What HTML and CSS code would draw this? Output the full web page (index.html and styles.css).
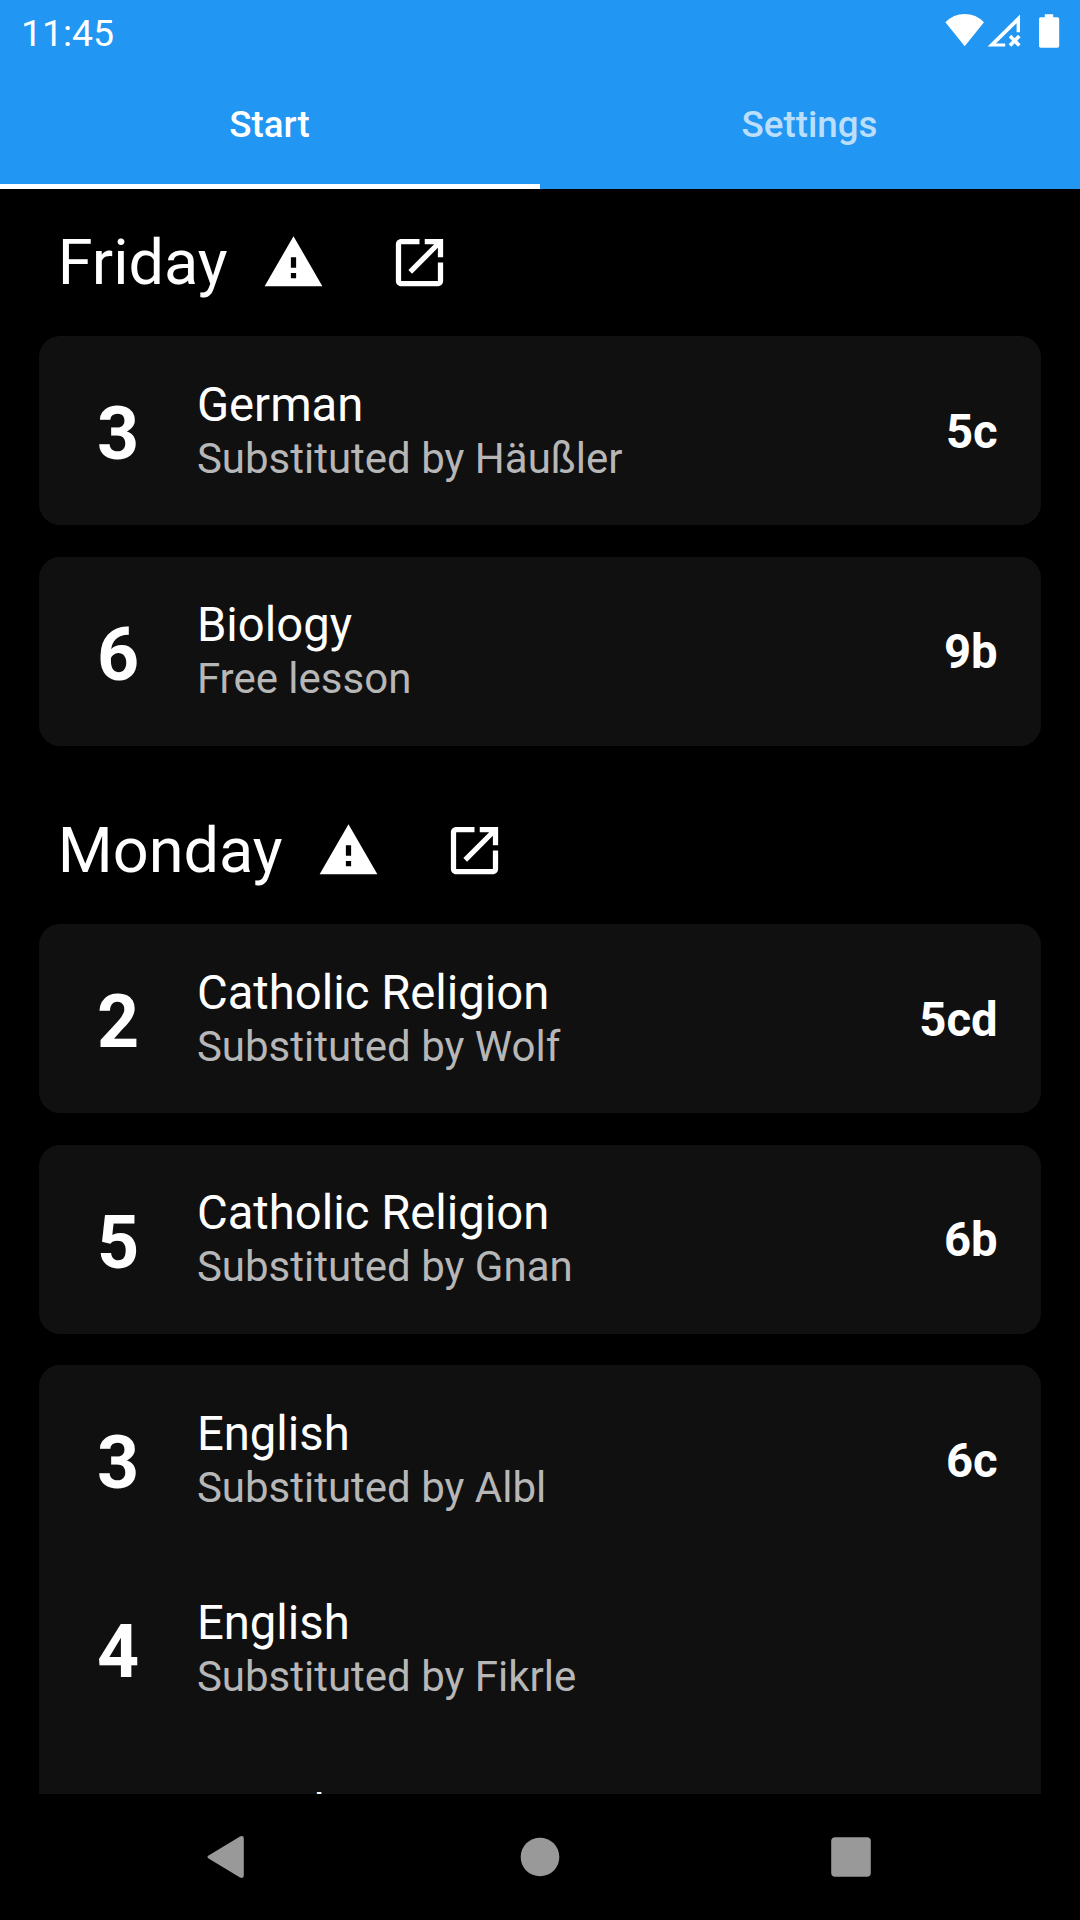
FILE: index.html
```html
<!DOCTYPE html>
<html lang="en">
<head>
<meta charset="utf-8">
<title>Substitutions</title>
<link rel="stylesheet" href="styles.css">
</head>
<body>
<svg class="defs" aria-hidden="true">
  <symbol id="warning" viewBox="0 0 24 24"><path d="M1 21h22L12 2 1 21zm12-3h-2v-2h2v2zm0-4h-2v-4h2v4z"/></symbol>
  <symbol id="open" viewBox="0 0 24 24"><path d="M19 19H5V5h7V3H5c-1.11 0-2 .9-2 2v14c0 1.1.89 2 2 2h14c1.1 0 2-.9 2-2v-7h-2v7zM14 3v2h3.59l-9.83 9.83 1.41 1.41L19 6.41V10h2V3h-7z"/></symbol>
</svg>
<div class="screen">
  <header class="app-bar">
    <div class="status">
      <span class="clock">11:45</span>
      <svg class="status-icons" viewBox="0 0 116 36" fill="#fff">
        <path d="M0.4 9.3Q8.5 1 19.7 1Q31 1 39 9.3L19.7 33.3Z"/>
        <path fill-rule="evenodd" d="M75 1.5V19.2H71.6V10.2L50.9 30.5H60.2V33.6H42.6Z"/>
        <path d="M65 22.9L74.3 32.6M74.3 22.9L65 32.6" fill="none" stroke="#fff" stroke-width="3.6"/>
        <path d="M99.8 1.2h8.4v3h4.2q1.8 0 1.8 1.8v27q0 1.8-1.8 1.8h-16.600q-1.800 0-1.800-1.800v-27q0-1.800 1.800-1.800h4z"/>
      </svg>
    </div>
    <nav class="tabs">
      <div class="tab active">Start</div>
      <div class="tab">Settings</div>
    </nav>
  </header>
  <main class="content">
    <section class="day">
      <div class="day-head"><h2>Friday</h2><svg class="icon"><use href="#warning"/></svg><svg class="icon"><use href="#open"/></svg></div>
      <div class="card">
        <div class="tile"><b class="period">3</b><div class="lesson"><p>German</p><p class="note">Substituted by Häußler</p></div><b class="group">5c</b></div>
      </div>
      <div class="card">
        <div class="tile"><b class="period">6</b><div class="lesson"><p>Biology</p><p class="note">Free lesson</p></div><b class="group">9b</b></div>
      </div>
    </section>
    <section class="day">
      <div class="day-head"><h2>Monday</h2><svg class="icon"><use href="#warning"/></svg><svg class="icon"><use href="#open"/></svg></div>
      <div class="card">
        <div class="tile"><b class="period">2</b><div class="lesson"><p>Catholic Religion</p><p class="note">Substituted by Wolf</p></div><b class="group">5cd</b></div>
      </div>
      <div class="card">
        <div class="tile"><b class="period">5</b><div class="lesson"><p>Catholic Religion</p><p class="note">Substituted by Gnan</p></div><b class="group">6b</b></div>
      </div>
      <div class="card">
        <div class="tile"><b class="period">3</b><div class="lesson"><p>English</p><p class="note">Substituted by Albl</p></div><b class="group">6c</b></div>
        <div class="tile"><b class="period">4</b><div class="lesson"><p>English</p><p class="note">Substituted by Fikrle</p></div></div>
        <div class="tile"><div></div><div class="lesson"><p>French</p></div></div>
      </div>
    </section>
  </main>
  <footer class="nav-bar">
    <svg class="nav-icon" viewBox="0 0 48 48"><path d="M4 22.300L35 3.500Q38.800 2 38.800 5.500V42.500Q38.800 46 35 44.500L4 25.700Q0.800 24 4 22.300Z"/></svg>
    <svg class="nav-icon" viewBox="0 0 48 48"><circle cx="24" cy="24" r="19.300"/></svg>
    <svg class="nav-icon" viewBox="0 0 48 48"><rect x="4.200" y="4.200" width="39.600" height="39.600" rx="4"/></svg>
  </footer>
</div>
</body>
</html>
```
FILE: styles.css
```css
* { box-sizing: border-box; margin: 0; padding: 0; }
body { background: #000; color: #fff; font-family: Roboto, sans-serif; }
.defs { display: none; }
.screen { width: 1080px; height: 1920px; display: flex; flex-direction: column; overflow: hidden; }
.app-bar { height: 189px; flex: none; background: #2196f3; }
.status { height: 63px; display: flex; justify-content: space-between; padding: 0 19px 0 21px; }
.clock { font-size: 37.4px; line-height: 67px; }
.status-icons { width: 116px; height: 36px; margin-top: 13px; }
.tabs { height: 126px; display: flex; }
.tab { flex: 1; text-align: center; font-size: 36.75px; font-weight: 500; line-height: 123px; color: #bbdefb; padding-right: 1px; }
.tab.active { color: #fff; border-bottom: 5px solid #fff; }
.content { flex: 1; min-height: 0; overflow: hidden; }
.day { padding: 10.5px 39.375px 31.5px; }
.day-head { height: 126px; display: flex; align-items: center; padding-left: 18.4px; margin-bottom: 10.5px; }
.day-head h2 { font-size: 63px; font-weight: 400; line-height: 74px; margin-right: 2.9px; }
.icon { width: 63px; height: 63px; margin: 0 31.5px; fill: #fff; }
.card { background: #101010; border-radius: 21px; }
.card + .card { margin-top: 31.5px; }
.tile { height: 189px; display: grid; grid-template-columns: 115.5px 1fr auto; padding: 0 43px 0 42px; }
.period { font-size: 73.5px; line-height: 197px; padding-left: 15.5px; }
.lesson { padding-top: 42.5px; font-size: 47.25px; line-height: 53px; }
.note { font-size: 42px; color: #b7b7b7; }
.group { font-size: 47.25px; line-height: 191px; padding-top: 0.5px; }
.nav-bar { height: 126px; flex: none; background: #000; display: flex; align-items: center; justify-content: center; gap: 263px; }
.nav-icon { width: 48px; height: 48px; fill: #999; }
```
